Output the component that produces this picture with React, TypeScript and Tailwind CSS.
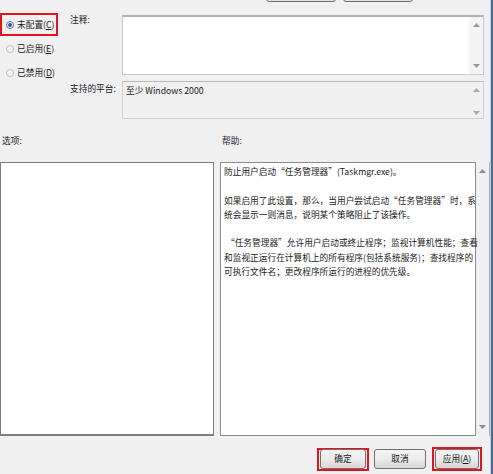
import React from "react";

function Up({ c = "#9a9a9a" }: { c?: string }) {
  return (
    <svg width="7" height="4" viewBox="0 0 7 4">
      <path d="M0 4 L3.5 0 L7 4 Z" fill={c} />
    </svg>
  );
}
function Down({ c = "#9a9a9a" }: { c?: string }) {
  return (
    <svg width="7" height="4" viewBox="0 0 7 4">
      <path d="M0 0 L3.5 4 L7 0 Z" fill={c} />
    </svg>
  );
}

function Radio({ checked }: { checked?: boolean }) {
  return checked ? (
    <span className="w-[8px] h-[8px] rounded-full border border-[#6f7a86] bg-[#e8eef5] flex items-center justify-center shrink-0">
      <span className="w-[4px] h-[4px] rounded-full bg-[#2a64b8]" />
    </span>
  ) : (
    <span className="w-[8px] h-[8px] rounded-full border border-[#b9bec4] bg-[#f4f4f4] shrink-0" />
  );
}

function Btn({ children, w }: { children: React.ReactNode; w: string }) {
  return (
    <div
      className={`${w} h-[20px] shrink-0 rounded-[3px] border border-[#707070] bg-gradient-to-b from-[#f4f4f4] via-[#ebebeb] to-[#d6d6d6] flex items-center justify-center`}
    >
      {children}
    </div>
  );
}

export default function App() {
  return (
    <div className="w-[493px] h-[474px] overflow-hidden bg-[#f0f0f0] flex text-[#1a1a1a] text-[8.7px] leading-[14px] [font-family:'Noto_Sans_CJK_SC','Noto_Sans',sans-serif]">
      <div className="w-[490px] shrink-0 flex flex-col">
        {/* top partially visible buttons */}
        <div className="h-[2px] flex items-end pl-[266px] gap-[7px]">
          <div className="w-[70px] h-[22px] shrink-0 rounded-[3px] border border-[#707070] bg-[#e2e2e2]" />
          <div className="w-[70px] h-[22px] shrink-0 rounded-[3px] border border-[#707070] bg-[#e2e2e2]" />
        </div>

        {/* upper block */}
        <div className="flex mt-[11px]">
          <div className="w-[70px] flex flex-col">
            <div className="w-[58px] h-[23px] border-2 border-[#e3151c] flex items-center pl-[4px] gap-[3px]">
              <Radio checked />
              <span>
                未配置(<span className="underline">C</span>)
              </span>
            </div>
            <div className="h-[24px] flex items-center pl-[6px] gap-[3px] mt-[1px]">
              <Radio />
              <span>
                已启用(<span className="underline">E</span>)
              </span>
            </div>
            <div className="h-[24px] flex items-center pl-[6px] gap-[3px]">
              <Radio />
              <span>
                已禁用(<span className="underline">D</span>)
              </span>
            </div>
          </div>
          <div className="w-[52px] flex flex-col">
            <div className="h-[69px] pt-[0px]">注释:</div>
            <div className="pt-[0px]">支持的平台:</div>
          </div>
          <div className="w-[362px] flex flex-col pt-[2px]">
            <div className="h-[60px] bg-white border border-[#c9c9c9] border-t-[#b0b0b0] border-t-2 flex justify-end">
              <div className="w-[14px] bg-[#f4f4f4] flex flex-col items-center justify-between py-[6px]">
                <Up />
                <Down />
              </div>
            </div>
            <div className="h-[38px] mt-[6px] bg-[#f0f0f0] border border-[#cfcfcf] border-t-[#b8b8b8] flex">
              <div className="flex-1 pl-[3px] pt-[2px]">至少 Windows 2000</div>
              <div className="w-[14px] flex flex-col items-center justify-between pt-[6px] pb-[3px]">
                <Up c="#a8a8a8" />
                <Down c="#a8a8a8" />
              </div>
            </div>
          </div>
        </div>

        {/* labels row */}
        <div className="h-[43px] flex items-center">
          <div className="w-[222px] pl-[2px]">选项:</div>
          <div>帮助:</div>
        </div>

        {/* boxes */}
        <div className="h-[274px] flex">
          <div className="w-[214px] bg-white border border-[#7e7e7e] border-b-2" />
          <div className="w-[6px]" />
          <div className="flex-1 flex border-r border-[#b4b4b4]">
            <div className="w-[256px] bg-white border border-[#8a8a8a] pt-[2px] pl-[3px] leading-[14.3px] whitespace-pre">
              <div>防止用户启动“任务管理器”(Taskmgr.exe)。</div>
              <div>&nbsp;</div>
              <div>如果启用了此设置，那么，当用户尝试启动“任务管理器”时，系</div>
              <div>统会显示一则消息，说明某个策略阻止了该操作。</div>
              <div>&nbsp;</div>
              <div> “任务管理器”允许用户启动或终止程序；监视计算机性能；查看</div>
              <div>和监视正运行在计算机上的所有程序(包括系统服务)；查找程序的</div>
              <div>可执行文件名；更改程序所运行的进程的优先级。</div>
            </div>
            <div className="flex-1 flex flex-col items-center justify-between pt-[7px] pb-[7px]">
              <Up c="#8c8c8c" />
              <Down c="#8c8c8c" />
            </div>
          </div>
        </div>

        {/* bottom buttons */}
        <div className="mt-[11px] h-[24px] flex justify-end items-center pr-[8px]">
          <div className="w-[52px] h-[23px] border-2 border-[#e3151c] flex items-center justify-center">
            <Btn w="w-[46px]">确定</Btn>
          </div>
          <div className="w-[5px]" />
          <Btn w="w-[52px]">取消</Btn>
          <div className="w-[6px]" />
          <div className="w-[50px] h-[24px] border-2 border-[#e3151c] flex items-center justify-center">
            <Btn w="w-[44px]">
              <span>
                应用(<span className="underline">A</span>)
              </span>
            </Btn>
          </div>
        </div>
      </div>
      <div className="w-[1px] bg-[#c3ccd8] shrink-0" />
      <div className="w-[2px] bg-[#4a6d95] shrink-0" />
    </div>
  );
}
